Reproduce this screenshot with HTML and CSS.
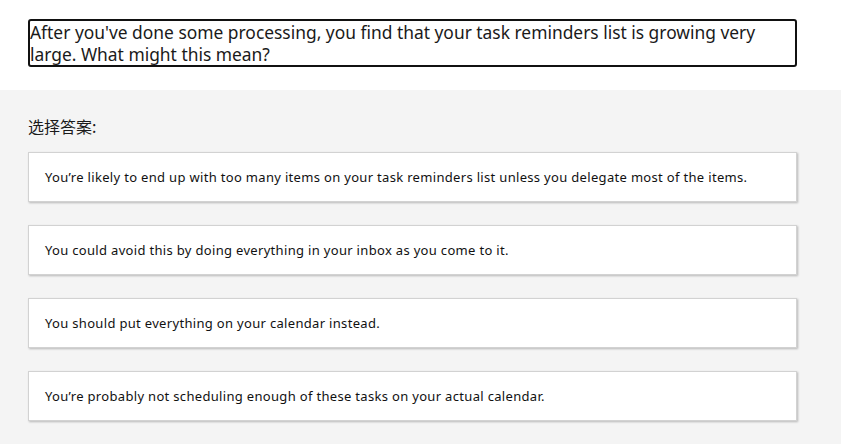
FILE: index.html
```html
<!DOCTYPE html>
<html lang="zh">
<head>
<meta charset="utf-8">
<link rel="stylesheet" href="styles.css">
</head>
<body>
<div class="top">
  <div class="question">After you've done some processing, you find that your task reminders list is growing very large. What might this mean?</div>
</div>
<div class="answers">
  <div class="label">选择答案:</div>
  <div class="option">You’re likely to end up with too many items on your task reminders list unless you delegate most of the items.</div>
  <div class="option">You could avoid this by doing everything in your inbox as you come to it.</div>
  <div class="option">You should put everything on your calendar instead.</div>
  <div class="option">You’re probably not scheduling enough of these tasks on your actual calendar.</div>
</div>
</body>
</html>
```
FILE: styles.css
```css
html, body {
  margin: 0;
  padding: 0;
  background: #f4f4f4;
  font-family: "Noto Sans", "Noto Sans CJK SC", sans-serif;
  color: #1a1a1a;
}
.top {
  background: #fff;
  height: 90px;
  box-sizing: border-box;
  padding: 19px 44px 0 28px;
}
.question {
  border: 2px solid #111;
  border-radius: 3px;
  height: 48px;
  box-sizing: border-box;
  font-size: 17.4px;
  line-height: 22px;
}
.answers {
  padding: 25px 44px 20px 28px;
  display: flex;
  flex-direction: column;
  gap: 23px;
}
.label {
  font-family: "Noto Sans CJK SC", sans-serif;
  font-size: 16px;
  line-height: 22px;
  margin-bottom: -8px;
}
.option {
  background: #fff;
  border: 1px solid #d2d2d2;
  box-shadow: 1px 1px 2px rgba(0,0,0,0.25);
  height: 50px;
  box-sizing: border-box;
  padding: 0 16px;
  display: flex;
  align-items: center;
  font-size: 13px;
  letter-spacing: 0.32px;
  color: #111;
}
```
